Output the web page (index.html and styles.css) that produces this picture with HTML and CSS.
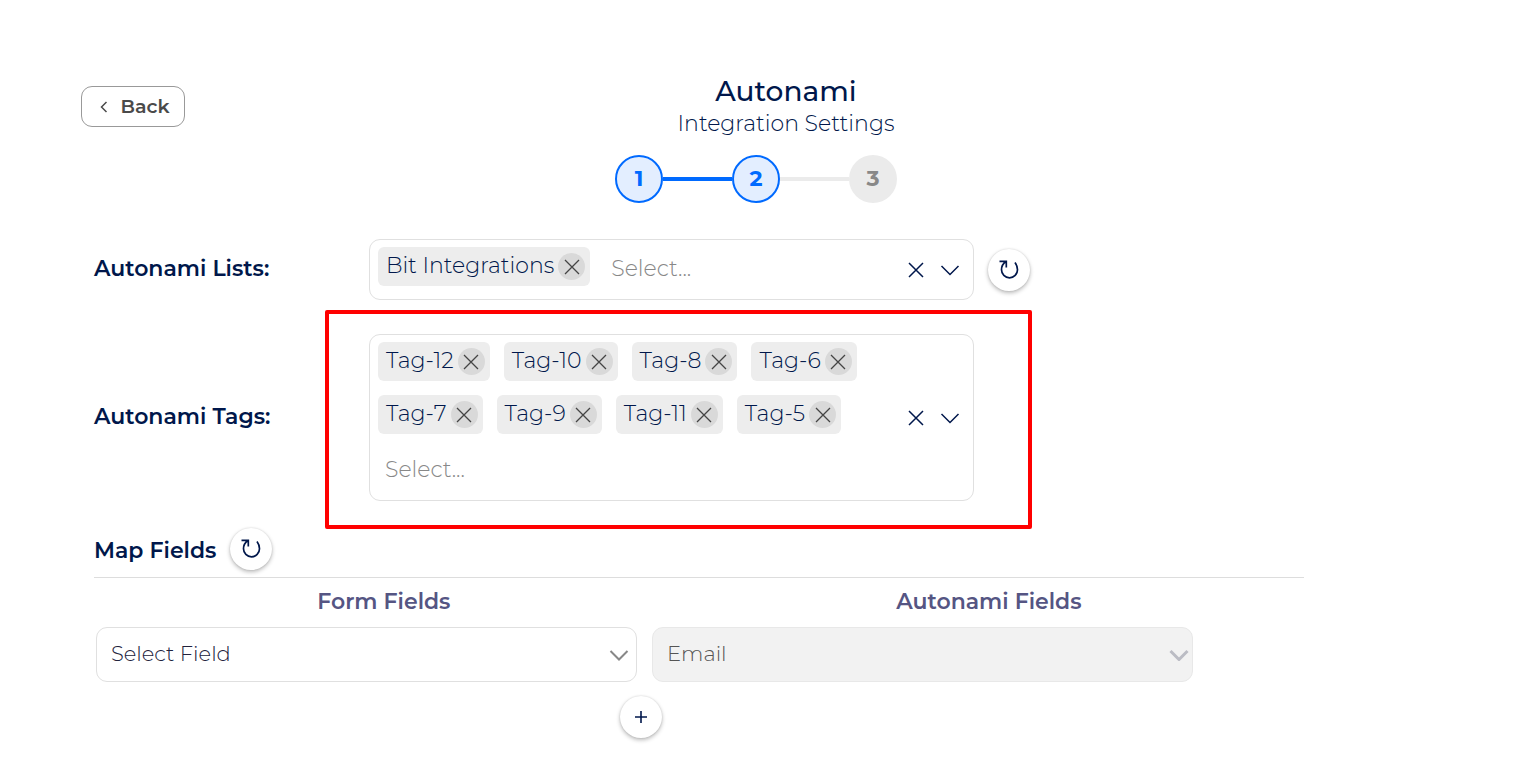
FILE: index.html
```html
<!DOCTYPE html>
<html lang="en">
<head>
<meta charset="utf-8">
<title>Autonami Integration Settings</title>
<link rel="stylesheet" href="styles.css">
</head>
<body>
<svg class="sprite" aria-hidden="true">
  <symbol id="x" viewBox="0 0 16 16"><path d="M1 1l14 14M15 1L1 15"/></symbol>
  <symbol id="down" viewBox="0 0 20 12"><path d="M1.500 2l8.500 8.500L18.500 2"/></symbol>
  <symbol id="reload" viewBox="0 0 20 20"><path d="M.5 1.300H7.300V7.500M7 1.500C4 3.500 2.500 6 2.500 9.800a8 8 0 0 0 16 0C18.500 6.500 17.500 4.500 16 2.500"/></symbol>
</svg>
<header class="header">
  <button class="back" type="button"><svg class="back-icon" viewBox="0 0 8 12"><path d="M6.500 1L1.500 6l5 5"/></svg>Back</button>
  <div class="titles">
    <h1 class="title">Autonami</h1>
    <p class="subtitle">Integration Settings</p>
  </div>
</header>
<ol class="steps">
  <li class="step active">1</li>
  <li class="line active-line"></li>
  <li class="step active">2</li>
  <li class="line"></li>
  <li class="step">3</li>
</ol>
<main class="content">
  <div class="row">
    <label class="label" for="lists">Autonami Lists:</label>
    <div class="multi">
      <div class="values">
        <span class="chip">Bit Integrations<button class="remove" type="button" aria-label="Remove Bit Integrations"><svg><use href="#x"/></svg></button></span>
        <input class="search" id="lists" type="text" placeholder="Select...">
      </div>
      <button class="tool" type="button" aria-label="Clear lists"><svg class="clear"><use href="#x"/></svg></button>
      <button class="tool" type="button" aria-label="Open lists"><svg class="open"><use href="#down"/></svg></button>
    </div>
    <button class="round" type="button" aria-label="Refresh lists"><svg class="reload"><use href="#reload"/></svg></button>
  </div>
  <div class="row tags-row">
    <label class="label" for="tags">Autonami Tags:</label>
    <div class="multi marked">
      <div class="values">
        <span class="chip">Tag-12<button class="remove" type="button" aria-label="Remove Tag-12"><svg><use href="#x"/></svg></button></span>
        <span class="chip">Tag-10<button class="remove" type="button" aria-label="Remove Tag-10"><svg><use href="#x"/></svg></button></span>
        <span class="chip">Tag-8<button class="remove" type="button" aria-label="Remove Tag-8"><svg><use href="#x"/></svg></button></span>
        <span class="chip">Tag-6<button class="remove" type="button" aria-label="Remove Tag-6"><svg><use href="#x"/></svg></button></span>
        <span class="chip">Tag-7<button class="remove" type="button" aria-label="Remove Tag-7"><svg><use href="#x"/></svg></button></span>
        <span class="chip">Tag-9<button class="remove" type="button" aria-label="Remove Tag-9"><svg><use href="#x"/></svg></button></span>
        <span class="chip">Tag-11<button class="remove" type="button" aria-label="Remove Tag-11"><svg><use href="#x"/></svg></button></span>
        <span class="chip">Tag-5<button class="remove" type="button" aria-label="Remove Tag-5"><svg><use href="#x"/></svg></button></span>
        <input class="search" id="tags" type="text" placeholder="Select...">
      </div>
      <button class="tool" type="button" aria-label="Clear tags"><svg class="clear"><use href="#x"/></svg></button>
      <button class="tool" type="button" aria-label="Open tags"><svg class="open"><use href="#down"/></svg></button>
    </div>
  </div>
  <div class="map-head">
    <h2 class="map-title">Map Fields</h2>
    <button class="round" type="button" aria-label="Refresh fields"><svg class="reload"><use href="#reload"/></svg></button>
  </div>
  <div class="columns">
    <label for="form-field">Form Fields</label>
    <label for="autonami-field">Autonami Fields</label>
  </div>
  <div class="fields">
    <div class="select-box">
      <select class="select" id="form-field"><option>Select Field</option></select>
      <svg class="arrow"><use href="#down"/></svg>
    </div>
    <div class="select-box disabled">
      <select class="select" id="autonami-field" disabled><option>Email</option></select>
      <svg class="arrow"><use href="#down"/></svg>
    </div>
  </div>
  <div class="add">
    <button class="round" type="button" aria-label="Add field"><svg class="plus" viewBox="0 0 12 12"><path d="M6 0v12M0 6h12"/></svg></button>
  </div>
</main>
</body>
</html>
```
FILE: styles.css
```css
* { box-sizing: border-box; }
body {
  margin: 0;
  background: #fff;
  color: #00174b;
  font-family: Montserrat, Inter, "Open Sans", sans-serif;
  font-size: 22px;
}
button, input, select { font: inherit; color: inherit; }
button { padding: 0; border: 0; background: none; cursor: pointer; }
svg { fill: none; stroke: currentColor; display: block; }
.sprite { position: absolute; width: 0; height: 0; }

.header {
  display: grid;
  grid-template-columns: auto 1fr;
  align-items: start;
  padding: 74px 132px 0 81px;
}
.back {
  display: flex;
  align-items: center;
  justify-content: center;
  gap: 12px;
  width: 104px;
  height: 41px;
  margin-top: 12px;
  padding-left: 4px;
  border: 1px solid #999;
  border-radius: 11px;
  color: #4a4a4a;
  font-size: 19px;
  font-weight: 600;
}
.back-icon { width: 8px; height: 12px; stroke-width: 1.500; }
.titles { text-align: center; }
.title { margin: 0; font-size: 28px; font-weight: 550; line-height: 34px; }
.subtitle { margin: 0; font-size: 22px; font-weight: 350; line-height: 32px; }

.steps {
  display: flex;
  align-items: center;
  justify-content: center;
  margin: 15px 0 0;
  padding: 0 7px 0 0;
  list-style: none;
}
.step {
  display: grid;
  place-items: center;
  width: 48px;
  height: 48px;
  padding-bottom: 2px;
  border-radius: 50%;
  background: #ebebeb;
  color: #888;
  font-weight: 700;
}
.step.active { border: 2px solid #006aff; background: #e3eeff; color: #006aff; }
.line { width: 69px; height: 4px; background: #ebebeb; }
.active-line { background: #006aff; }

.content { max-width: 1304px; padding: 36px 0 0 94px; }
.row { display: flex; align-items: center; }
.tags-row { margin-top: 34px; }
.label { flex: 0 0 275px; padding-bottom: 2px; font-weight: 600; }
.multi {
  position: relative;
  display: flex;
  align-items: center;
  flex: 0 1 605px;
  padding: 7px 6px 7px 8px;
  border: 1px solid #e0e0e0;
  border-radius: 11px;
}
.marked::after {
  content: "";
  position: absolute;
  inset: -25px -59px -29px -45px;
  border: 4px solid #f00;
  border-radius: 2px;
  pointer-events: none;
}
.values { display: flex; flex: 1; flex-wrap: wrap; gap: 14px; }
.chip {
  display: flex;
  align-items: center;
  gap: 4px;
  height: 39px;
  padding: 0 5px 2px 8px;
  border-radius: 6px;
  background: #ededed;
  font-weight: 350;
}
.remove {
  display: grid;
  place-items: center;
  width: 27px;
  height: 27px;
  margin-top: 2px;
  border-radius: 50%;
  background: #d9d9d9;
  color: #444;
}
.remove svg { width: 16px; height: 16px; stroke-width: 1.300; }
.search {
  flex: 1 0 120px;
  width: 120px;
  height: 45px;
  padding: 0 7px 2px;
  border: 0;
  outline: 0;
  background: none;
  font-weight: 350;
}
.search::placeholder { color: #888; opacity: 1; }
.tool { display: grid; place-items: center; width: 34px; height: 34px; }
.clear { width: 16px; height: 16px; stroke-width: 1.500; }
.open { width: 20px; height: 12px; stroke-width: 1.500; }
.round {
  display: grid;
  place-items: center;
  flex: none;
  width: 42px;
  height: 42px;
  margin-left: 14px;
  border-radius: 50%;
  background: #fff;
  box-shadow: 0 2px 4px #0004, 0 0 2px #0002;
}
.reload { width: 20px; height: 20px; stroke-width: 1.700; }
.plus { width: 12px; height: 12px; stroke-width: 1.600; }

.map-head {
  display: flex;
  align-items: center;
  margin-top: 27px;
  padding-bottom: 7px;
  border-bottom: 1px solid #ddd;
}
.map-title { margin: 0; padding-top: 2px; font-size: 22px; font-weight: 600; }
.columns {
  display: grid;
  grid-template-columns: 23fr 25fr;
  padding: 10px 0 12px;
  color: #555583;
  font-weight: 600;
  line-height: 27px;
  text-align: center;
}
.fields {
  display: grid;
  grid-template-columns: 1fr 1fr;
  gap: 15px;
  padding: 0 111px 0 2px;
}
.select-box { position: relative; }
.select {
  display: block;
  appearance: none;
  width: 100%;
  height: 55px;
  padding: 0 40px 2px 14px;
  border: 1px solid #e0e0e0;
  border-radius: 11px;
  background: #fff;
  color: #22223c;
  font-size: 21px;
  font-weight: 300;
}
.select:disabled { border-color: #e8e8e8; background: #f2f2f2; color: #555; opacity: 1; }
.arrow {
  position: absolute;
  top: 22px;
  right: 8px;
  width: 20px;
  height: 12px;
  color: #888;
  stroke-width: 2;
  pointer-events: none;
}
.disabled .arrow { right: 4px; color: #bbbcc4; stroke-width: 3; }
.add { display: flex; justify-content: center; padding: 14px 130px 24px 0; }
```
